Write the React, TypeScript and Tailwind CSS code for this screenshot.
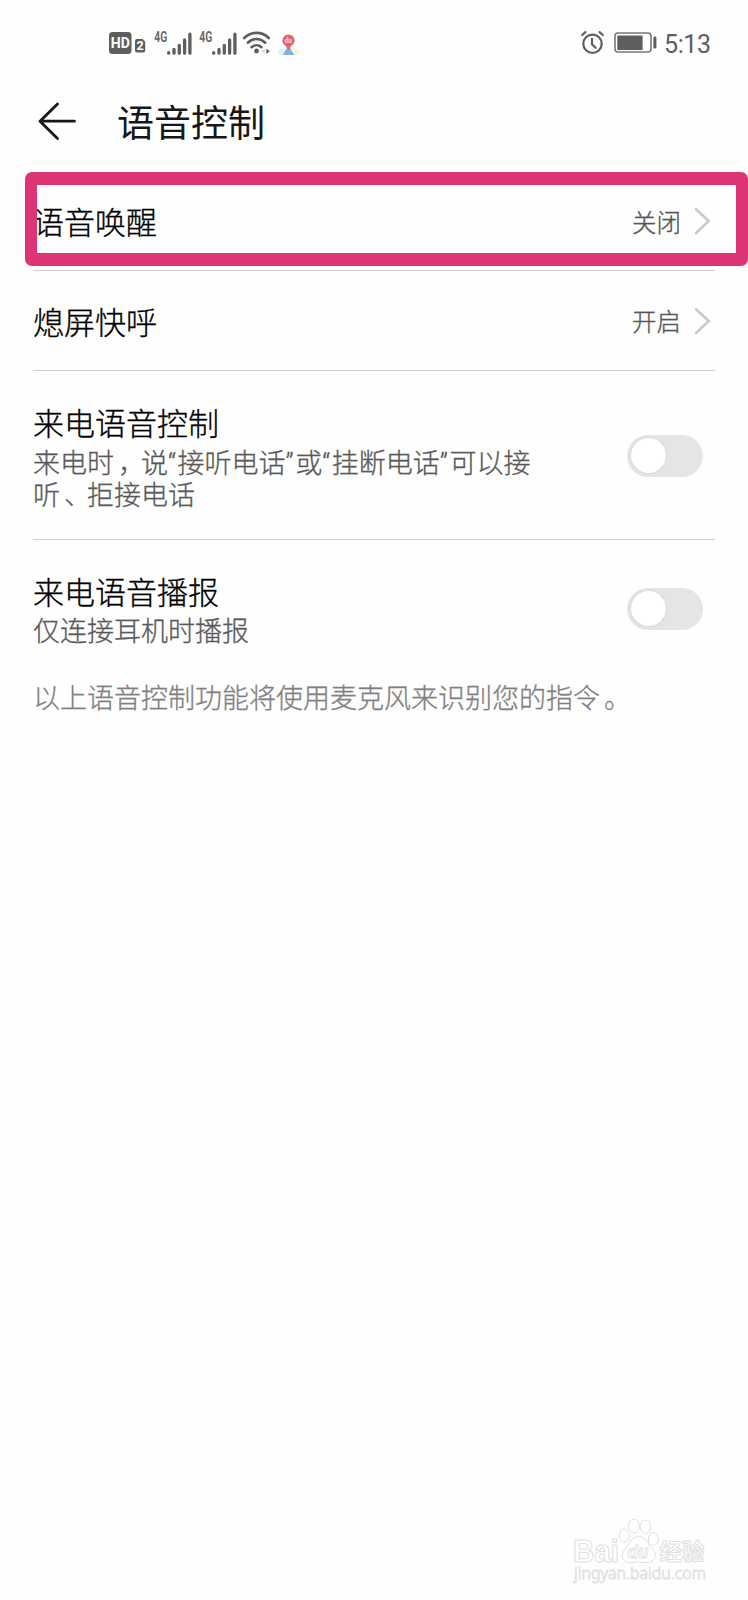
import type { ReactNode } from "react";

function Signal() {
  return (
    <svg className="h-7 w-[40px] shrink-0" viewBox="0 0 40 28" fill="none">
      <text
        x="0.300"
        y="13"
        fontSize="14"
        fontWeight="700"
        fontFamily="Roboto, sans-serif"
        fill="#6a6a6a"
        textLength="13"
        lengthAdjust="spacingAndGlyphs"
      >
        4G
      </text>
      <path
        d="M14.700 23.600v.6M20 20.500v3.700M25.300 16.300v7.900M30.600 10.900v13.300M35.900 5.200v19"
        stroke="#5e5e5e"
        strokeWidth="3.300"
        strokeLinecap="round"
      />
    </svg>
  );
}

function StatusBar() {
  return (
    <header className="flex h-[86px] items-center justify-between pl-[109px] pr-[39px]">
      <div className="flex items-center">
        <svg className="h-7 w-[45px] shrink-0" viewBox="0 0 45 28">
          <rect x="0" y="3" width="22.500" height="22" rx="3.500" fill="#5e5e5e" />
          <text x="1.800" y="19.300" fontSize="14.500" fontWeight="700" fontFamily="Roboto, sans-serif" fill="#fff" textLength="19" lengthAdjust="spacingAndGlyphs">
            HD
          </text>
          <path d="M28 10h5.500l2.700 2.700V21.500q0 2-2 2h-6.200q-2 0-2-2V12q0-2 2-2z" fill="#5e5e5e" />
          <text x="27.600" y="21.200" fontSize="12.500" fontWeight="700" fontFamily="Roboto, sans-serif" fill="#fff">
            2
          </text>
        </svg>
        <Signal />
        <div className="w-[5px]" />
        <Signal />
        <svg className="ml-[3px] h-7 w-[30px] shrink-0" viewBox="0 0 30 28" fill="none" stroke="#5e5e5e" strokeWidth="2.600" strokeLinecap="round">
          <path d="M2.200 9C9 2.200 20 2.200 26.800 9M5.800 13.700C11 8.800 18 8.800 23.200 13.700M9.600 18.200C12.500 15.600 16.500 15.600 19.400 18.200" />
          <circle cx="14.500" cy="22" r="2.400" fill="#5e5e5e" stroke="none" />
          <path d="M24.300 19.500v5.400l3.500-2.700z" fill="#5e5e5e" stroke="none" />
          <path d="M22.800 19.500v5.400l-3.500-2.700z" fill="#d8d8d8" stroke="none" />
        </svg>
        <svg className="ml-[4px] h-7 w-[26px] shrink-0" viewBox="0 0 26 28">
          <path d="M4 19.500h6L6 25.500H1z" fill="#dcf1f7" />
          <path d="M16 19.500h5l3.500 6H19z" fill="#f7f4d8" />
          <path d="M11.300 18.500h2.400l4.800 7.500h-12z" fill="#7fb1e3" />
          <path d="M12.500 5.500a6.200 6.200 0 0 1 6.200 6.200c0 4-4.700 4.800-5.400 9h-1.600c-.7-4.200-5.400-5-5.400-9a6.200 6.200 0 0 1 6.200-6.200z" fill="#e0666c" />
          <text x="8.700" y="14" fontSize="6.500" fontWeight="700" fontFamily="Roboto, sans-serif" fill="#f7dcdc">du</text>
        </svg>
      </div>
      <div className="flex items-center text-[#5e5e5e]">
        <svg className="h-7 w-6 shrink-0" viewBox="0 0 24 28" fill="none" stroke="#5e5e5e" strokeWidth="2.200" strokeLinecap="round">
          <circle cx="11.500" cy="14.800" r="9.200" />
          <path d="M11 9.800v5.400l3.600 3.600M1.200 6l3.200-2.900M21.800 6l-3.200-2.900" />
        </svg>
        <svg className="ml-[9px] h-7 w-[44px] shrink-0" viewBox="0 0 44 28">
          <rect x="1" y="4" width="36" height="19" rx="3" fill="none" stroke="#777" strokeWidth="1.600" />
          <rect x="3.300" y="6.500" width="25.300" height="14.500" fill="#5e5e5e" />
          <rect x="39.400" y="7.500" width="3" height="12" rx="1.300" fill="#5e5e5e" />
        </svg>
        <span className="ml-[6px] mt-[3px] w-[45px] whitespace-nowrap font-['Roboto',sans-serif] text-[25px] font-normal leading-7 tracking-[-0.400px]">5:13</span>
      </div>
    </header>
  );
}

function Value({ text }: { text: string }) {
  return (
    <div className="flex items-center pr-[3px]">
      <span className="mt-[1px] text-[24.500px] text-[#555]">{text}</span>
      <svg className="ml-[13px] h-[28px] w-[18px]" viewBox="0 0 18 28" fill="none" stroke="#c9c9c9" strokeWidth="2.600" strokeLinecap="round">
        <path d="M2 2.200l12.700 11.900L2 26" />
      </svg>
    </div>
  );
}

function Toggle() {
  return (
    <div className="mr-3 flex h-[42px] w-[76px] shrink-0 rounded-full bg-[#e5e5e5] pl-[4px] pt-[3px]">
      <div className="h-[35px] w-[35px] rounded-full bg-white shadow-[0_0_2px_1px_#d9d9d9]" />
    </div>
  );
}

function Row({ className, children }: { className: string; children: ReactNode }) {
  return <div className={`mx-[33px] flex items-center justify-between ${className}`}>{children}</div>;
}

/* Moves a full-width punctuation mark a little to the right inside its cell. */
function Punct({ before, mark }: { before: string; mark: string }) {
  return (
    <>
      <span className="tracking-[4px]">{before}</span>
      <span className="tracking-[-4px]">{mark}</span>
    </>
  );
}

function Quote({ children }: { children: string }) {
  return <span className="font-['Roboto',sans-serif] leading-none tracking-[1.500px]">{children}</span>;
}

function Watermark() {
  const outline = { fill: "#fff", stroke: "#e0e0e0", strokeWidth: 1 };
  return (
    <svg className="mb-[14px] mr-[38px] h-[72px] w-[138px]" viewBox="0 0 138 72" {...outline}>
      <text x="1" y="47.500" fontSize="31" fontWeight="700" fontFamily="Liberation Sans, sans-serif" textLength="46" lengthAdjust="spacingAndGlyphs">Bai</text>
      <ellipse cx="52.300" cy="21.700" rx="5" ry="6.500" />
      <ellipse cx="62" cy="12" rx="5.300" ry="7" />
      <ellipse cx="73.500" cy="12.700" rx="5.300" ry="6.700" />
      <ellipse cx="81.300" cy="25" rx="5" ry="6.500" />
      <path d="M66.500 22.700c8 0 9 7.500 13 11.300 7 6 4 14.500-5 14.500-3 0-5-.5-8-.5s-5 .5-8 .5c-9 0-11-8.500-4.500-14.500 4-4 5-11.300 12.500-11.300z" />
      <text x="55.500" y="43.700" fontSize="19" fontStyle="italic" fontWeight="700" fontFamily="Liberation Sans, sans-serif" textLength="21" lengthAdjust="spacingAndGlyphs">du</text>
      <text x="87.500" y="45.500" fontSize="23" fontWeight="700" fontFamily="Noto Sans CJK SC, sans-serif" textLength="45" lengthAdjust="spacingAndGlyphs">经验</text>
      <text x="2" y="64.500" fontSize="16" strokeWidth="0.800" fontFamily="Noto Sans, sans-serif" textLength="132" lengthAdjust="spacingAndGlyphs">jingyan.baidu.com</text>
    </svg>
  );
}

export default function App() {
  return (
    <div className="relative flex h-[1600px] w-[748px] flex-col bg-[#fefefe] font-['Noto_Sans_CJK_SC',sans-serif] font-light text-black">
      <StatusBar />
      <div className="flex h-[84px] items-center gap-[40px] pb-[14px] pl-[37px]">
        <svg className="h-10 w-10" viewBox="0 0 40 40" fill="none" stroke="#171717" strokeWidth="2.800" strokeLinecap="round" strokeLinejoin="round">
          <path d="M20.500 3L3 20.200 20.500 37.500M3.500 20.200H37.500" />
        </svg>
        <h1 className="text-[37px] font-normal leading-none text-[#171717]">语音控制</h1>
      </div>
      <main className="flex flex-col text-[31px] leading-[38px] [-webkit-text-stroke:0.3px]">
        <Row className="h-[101px] border-b border-[#d0d0d0] pt-[2px]">
          <span>语音唤醒</span>
          <Value text="关闭" />
        </Row>
        <Row className="h-[100px] border-b border-[#d0d0d0]">
          <span>熄屏快呼</span>
          <Value text="开启" />
        </Row>
        <Row className="h-[169px] border-b border-[#d0d0d0] pt-[2px]">
          <div className="whitespace-nowrap">
            <div>来电语音控制</div>
            <p className="mt-[5px] text-[27px] leading-[32px] text-[#595959]">
              来电
              <Punct before="时" mark="，" />说<Quote>“</Quote>接听电话<Quote>”</Quote>或<Quote>“</Quote>挂断电话<Quote>”</Quote>可以接
              <br />
              <Punct before="听" mark="、" />拒接电话
            </p>
          </div>
          <Toggle />
        </Row>
        <Row className="h-[138px]">
          <div>
            <div>来电语音播报</div>
            <p className="mt-[4px] text-[27px] leading-[32px] text-[#595959]">仅连接耳机时播报</p>
          </div>
          <Toggle />
        </Row>
        <p className="mx-[33px] text-[27px] text-[#808080]">
          以上语音控制功能将使用麦克风来识别您的指
          <Punct before="令" mark="。" />
        </p>
      </main>
      <div className="mt-auto flex justify-end">
        <Watermark />
      </div>
      <div className="absolute left-[25px] top-[172px] h-[94px] w-[723px] rounded-[7px] border-x-[12px] border-y-[13px] border-[#dc3575]" />
    </div>
  );
}
